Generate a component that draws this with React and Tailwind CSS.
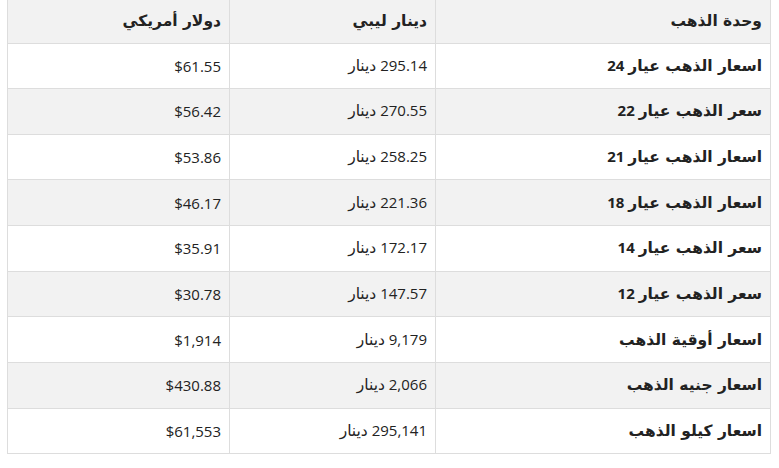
const rows = [
  ["اسعار الذهب عيار 24", "295.14 دينار", "$61.55"],
  ["سعر الذهب عيار 22", "270.55 دينار", "$56.42"],
  ["اسعار الذهب عيار 21", "258.25 دينار", "$53.86"],
  ["اسعار الذهب عيار 18", "221.36 دينار", "$46.17"],
  ["سعر الذهب عيار 14", "172.17 دينار", "$35.91"],
  ["سعر الذهب عيار 12", "147.57 دينار", "$30.78"],
  ["اسعار أوقية الذهب", "9,179 دينار", "$1,914"],
  ["اسعار جنيه الذهب", "2,066 دينار", "$430.88"],
  ["اسعار كيلو الذهب", "295,141 دينار", "$61,553"],
];

// Arabic runs use DejaVu Sans, digits stay in Open Sans
function Txt({ children }) {
  const parts = children.split(/([\u0600-\u06FF][\u0600-\u06FF ]*[\u0600-\u06FF]|[\u0600-\u06FF])/).filter(Boolean);
  return parts.map((p, i) =>
    /[\u0600-\u06FF]/.test(p) ? <span key={i} className="font-['DejaVu_Sans',sans-serif] text-[15.5px]">{p}</span> : <span key={i}>{p}</span>
  );
}

export default function App() {
  return (
    <div className="w-[779px] h-[468px] bg-white pl-[7px] pr-[8px] font-['Open_Sans',sans-serif] text-[15px] text-[#222]" dir="rtl">
      <table className="w-full border-collapse table-fixed">
        <thead>
          <tr className="bg-[#f2f2f2] h-[43px]">
            <th className="w-[335px] border-x border-b border-[#ddd] px-2 text-right font-[700]"><Txt>وحدة الذهب</Txt></th>
            <th className="w-[206px] border-x border-b border-[#ddd] px-2 text-right font-[700]"><Txt>دينار ليبي</Txt></th>
            <th className="border-x border-b border-[#ddd] px-2 text-right font-[700]"><Txt>دولار أمريكي</Txt></th>
          </tr>
        </thead>
        <tbody>
          {rows.map((r, i) => (
            <tr key={i} className={`h-[45.67px] ${i % 2 === 1 ? "bg-[#f2f2f2]" : "bg-white"}`}>
              <td className="border border-[#ddd] px-2 text-right font-bold"><Txt>{r[0]}</Txt></td>
              <td className="border border-[#ddd] px-2 text-right"><Txt>{r[1]}</Txt></td>
              <td className="border border-[#ddd] px-2 text-right">{r[2]}</td>
            </tr>
          ))}
        </tbody>
      </table>
    </div>
  );
}
